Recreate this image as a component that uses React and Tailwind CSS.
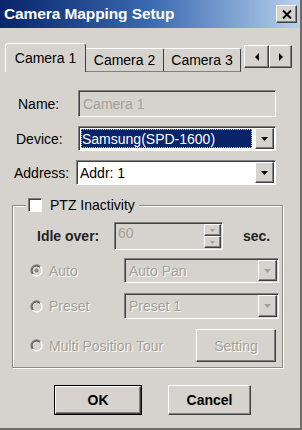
import React from "react";

const raised =
  "border border-t-white border-l-white border-r-[#404040] border-b-[#404040] shadow-[inset_-1px_-1px_0_#808080] bg-[#d6d3ce]";
const sunken =
  "border border-t-[#808080] border-l-[#808080] border-r-white border-b-white shadow-[inset_1px_1px_0_#404040]";
const disabledText = "text-[#a3a09a] [text-shadow:1px_1px_0_#ffffff]";

function Tri({ color = "#000", w = 7, h = 4, dir = "down" }) {
  const pts =
    dir === "down"
      ? `0,0 ${w},0 ${w / 2},${h}`
      : dir === "left"
      ? `${w},0 ${w},${h} 0,${h / 2}`
      : `0,0 0,${h} ${w},${h / 2}`;
  return (
    <svg width={w} height={h} viewBox={`0 0 ${w} ${h}`}>
      <polygon points={pts} fill={color} />
    </svg>
  );
}

function DropBtn({ disabled }) {
  return (
    <div className={`${raised} w-[19px] self-stretch m-[1px] flex items-center justify-center`}>
      <Tri color={disabled ? "#a3a09a" : "#000"} />
    </div>
  );
}

function Radio({ checked }) {
  return (
    <svg width="13" height="13" viewBox="0 0 13 13" className="shrink-0">
      <circle cx="6.5" cy="6.5" r="5.5" fill="#d6d3ce" />
      <path d="M2.61 10.39 A5.5 5.5 0 0 1 10.39 2.61" stroke="#808080" strokeWidth="1.3" fill="none" />
      <path d="M3.3 9.7 A4.5 4.5 0 0 1 9.7 3.3" stroke="#404040" strokeWidth="1" fill="none" />
      <path d="M10.39 2.61 A5.5 5.5 0 0 1 2.61 10.39" stroke="#ffffff" strokeWidth="1.3" fill="none" />
      {checked && <circle cx="6.5" cy="6.5" r="2" fill="#8a8781" />}
    </svg>
  );
}

export default function App() {
  return (
    <div className="w-[302px] h-[430px] bg-[#d6d3ce] flex flex-col overflow-hidden border-r-[2px] border-b-[2px] border-r-[#6e6c68] border-b-[#6e6c68] font-['Liberation_Sans',Arial,sans-serif] text-[14px] leading-none text-black">
      {/* Title bar */}
      <div className="h-[28px] shrink-0 flex items-center justify-between pl-[4px] pr-[3px] bg-gradient-to-r from-[#0a246a] via-[#3a6ab0] to-[#b8d0ec]">
        <span className="text-white font-bold text-[15.5px] tracking-[-0.1px]">Camera Mapping Setup</span>
        <div className={`${raised} w-[21px] h-[18px] flex items-center justify-center`}>
          <svg width="10" height="9" viewBox="0 0 10 9">
            <path d="M1 0.5 L9 8.5 M9 0.5 L1 8.5" stroke="#000" strokeWidth="2" />
          </svg>
        </div>
      </div>

      {/* Tabs */}
      <div className="mt-[15px] ml-[5px] h-[29px] flex items-end shrink-0">
        <div className="w-[81px] h-[29px] border-t border-l border-white border-r border-r-[#404040] rounded-t-[3px] flex items-center justify-center pb-[1px]">
          Camera 1
        </div>
        <div className="w-[78px] h-[24px] border-t border-white border-r border-r-[#404040] border-b border-b-[#808080] rounded-tr-[2px] flex items-center justify-center">
          Camera 2
        </div>
        <div className="w-[77px] h-[24px] border-t border-white border-r border-r-[#404040] border-b border-b-[#808080] rounded-tr-[2px] flex items-center justify-center">
          Camera 3
        </div>
        <div className="ml-[3px] mb-[4px] flex">
          <div className={`${raised} w-[25px] h-[23px] flex items-center justify-center`}>
            <Tri dir="left" w={4} h={8} />
          </div>
          <div className={`${raised} w-[23px] h-[23px] flex items-center justify-center`}>
            <Tri dir="right" w={4} h={8} />
          </div>
        </div>
      </div>

      {/* Name */}
      <div className="mt-[18px] h-[27px] flex items-center">
        <span className="ml-[18px] w-[60px]">Name:</span>
        <div className={`${sunken} w-[198px] h-[27px] flex items-center pl-[4px] text-[#a3a09a]`}>Camera 1</div>
      </div>

      {/* Device */}
      <div className="mt-[9px] h-[25px] flex items-center">
        <span className="ml-[16px] w-[62px]">Device:</span>
        <div className={`${sunken} w-[198px] h-[25px] flex bg-white`}>
          <div className="flex-1 m-[2px] bg-[#0a246a] outline-1 outline-dotted outline-[#c8c8a0] -outline-offset-1 flex items-center pl-[1px] text-white">
            Samsung(SPD-1600)
          </div>
          <DropBtn />
        </div>
      </div>

      {/* Address */}
      <div className="mt-[9px] h-[25px] flex items-center">
        <span className="ml-[14px] w-[62px]">Address:</span>
        <div className={`${sunken} w-[200px] h-[25px] flex bg-white`}>
          <div className="flex-1 flex items-center pl-[3px]">Addr: 1</div>
          <DropBtn />
        </div>
      </div>

      {/* Group box */}
      <div className="relative mt-[20px] ml-[12px] w-[271px] h-[163px] border border-[#8c8a85] shadow-[1px_1px_0_#ffffff,inset_1px_1px_0_#ffffff] flex flex-col">
        <div className="absolute left-[13px] top-[-8px] flex items-center gap-[8px] bg-[#d6d3ce] pl-[2px] pr-[4px]">
          <div className={`${sunken} w-[14px] h-[14px] bg-white`} />
          <span>PTZ Inactivity</span>
        </div>

        {/* Idle over */}
        <div className="mt-[16px] h-[28px] flex items-center">
          <span className="ml-[24px] w-[77px] font-bold text-[#222]">Idle over:</span>
          <div className={`${sunken} w-[109px] h-[28px] flex`}>
            <div className="flex-1 pl-[3px] pt-[3px] text-[#a3a09a]">60</div>
            <div className="w-[17px] flex flex-col m-[1px]">
              <div className={`${raised} flex-1 flex items-center justify-center`}>
                <Tri color="#a3a09a" w={5} h={3} dir="down" />
              </div>
              <div className={`${raised} flex-1 flex items-center justify-center`}>
                <Tri color="#a3a09a" w={5} h={3} />
              </div>
            </div>
          </div>
          <span className="ml-[20px] font-bold text-[#222]">sec.</span>
        </div>

        {/* Auto */}
        <div className="mt-[8px] h-[25px] flex items-center">
          <span className="ml-[17px]"><Radio checked /></span>
          <span className={`ml-[6px] w-[75px] ${disabledText}`}>Auto</span>
          <div className={`${sunken} w-[155px] h-[25px] flex`}>
            <div className={`flex-1 flex items-center pl-[4px] ${disabledText}`}>Auto Pan</div>
            <DropBtn disabled />
          </div>
        </div>

        {/* Preset */}
        <div className="mt-[10px] h-[26px] flex items-center">
          <span className="ml-[17px]"><Radio /></span>
          <span className={`ml-[6px] w-[75px] ${disabledText}`}>Preset</span>
          <div className={`${sunken} w-[155px] h-[26px] flex`}>
            <div className={`flex-1 flex items-center pl-[4px] ${disabledText}`}>Preset 1</div>
            <DropBtn disabled />
          </div>
        </div>

        {/* Multi Position Tour */}
        <div className="mt-[10px] h-[33px] flex items-center">
          <span className="ml-[17px]"><Radio /></span>
          <span className={`ml-[6px] w-[147px] ${disabledText}`}>Multi Position Tour</span>
          <div className={`${raised} w-[80px] h-[33px] flex items-center justify-center ${disabledText}`}>Setting</div>
        </div>
      </div>

      {/* Buttons */}
      <div className="mt-[17px] flex">
        <div className="ml-[54px] w-[88px] h-[30px] border border-black">
          <div className={`${raised} w-full h-full flex items-center justify-center font-bold`}>OK</div>
        </div>
        <div className={`${raised} ml-[26px] w-[83px] h-[30px] flex items-center justify-center font-bold`}>Cancel</div>
      </div>
    </div>
  );
}
